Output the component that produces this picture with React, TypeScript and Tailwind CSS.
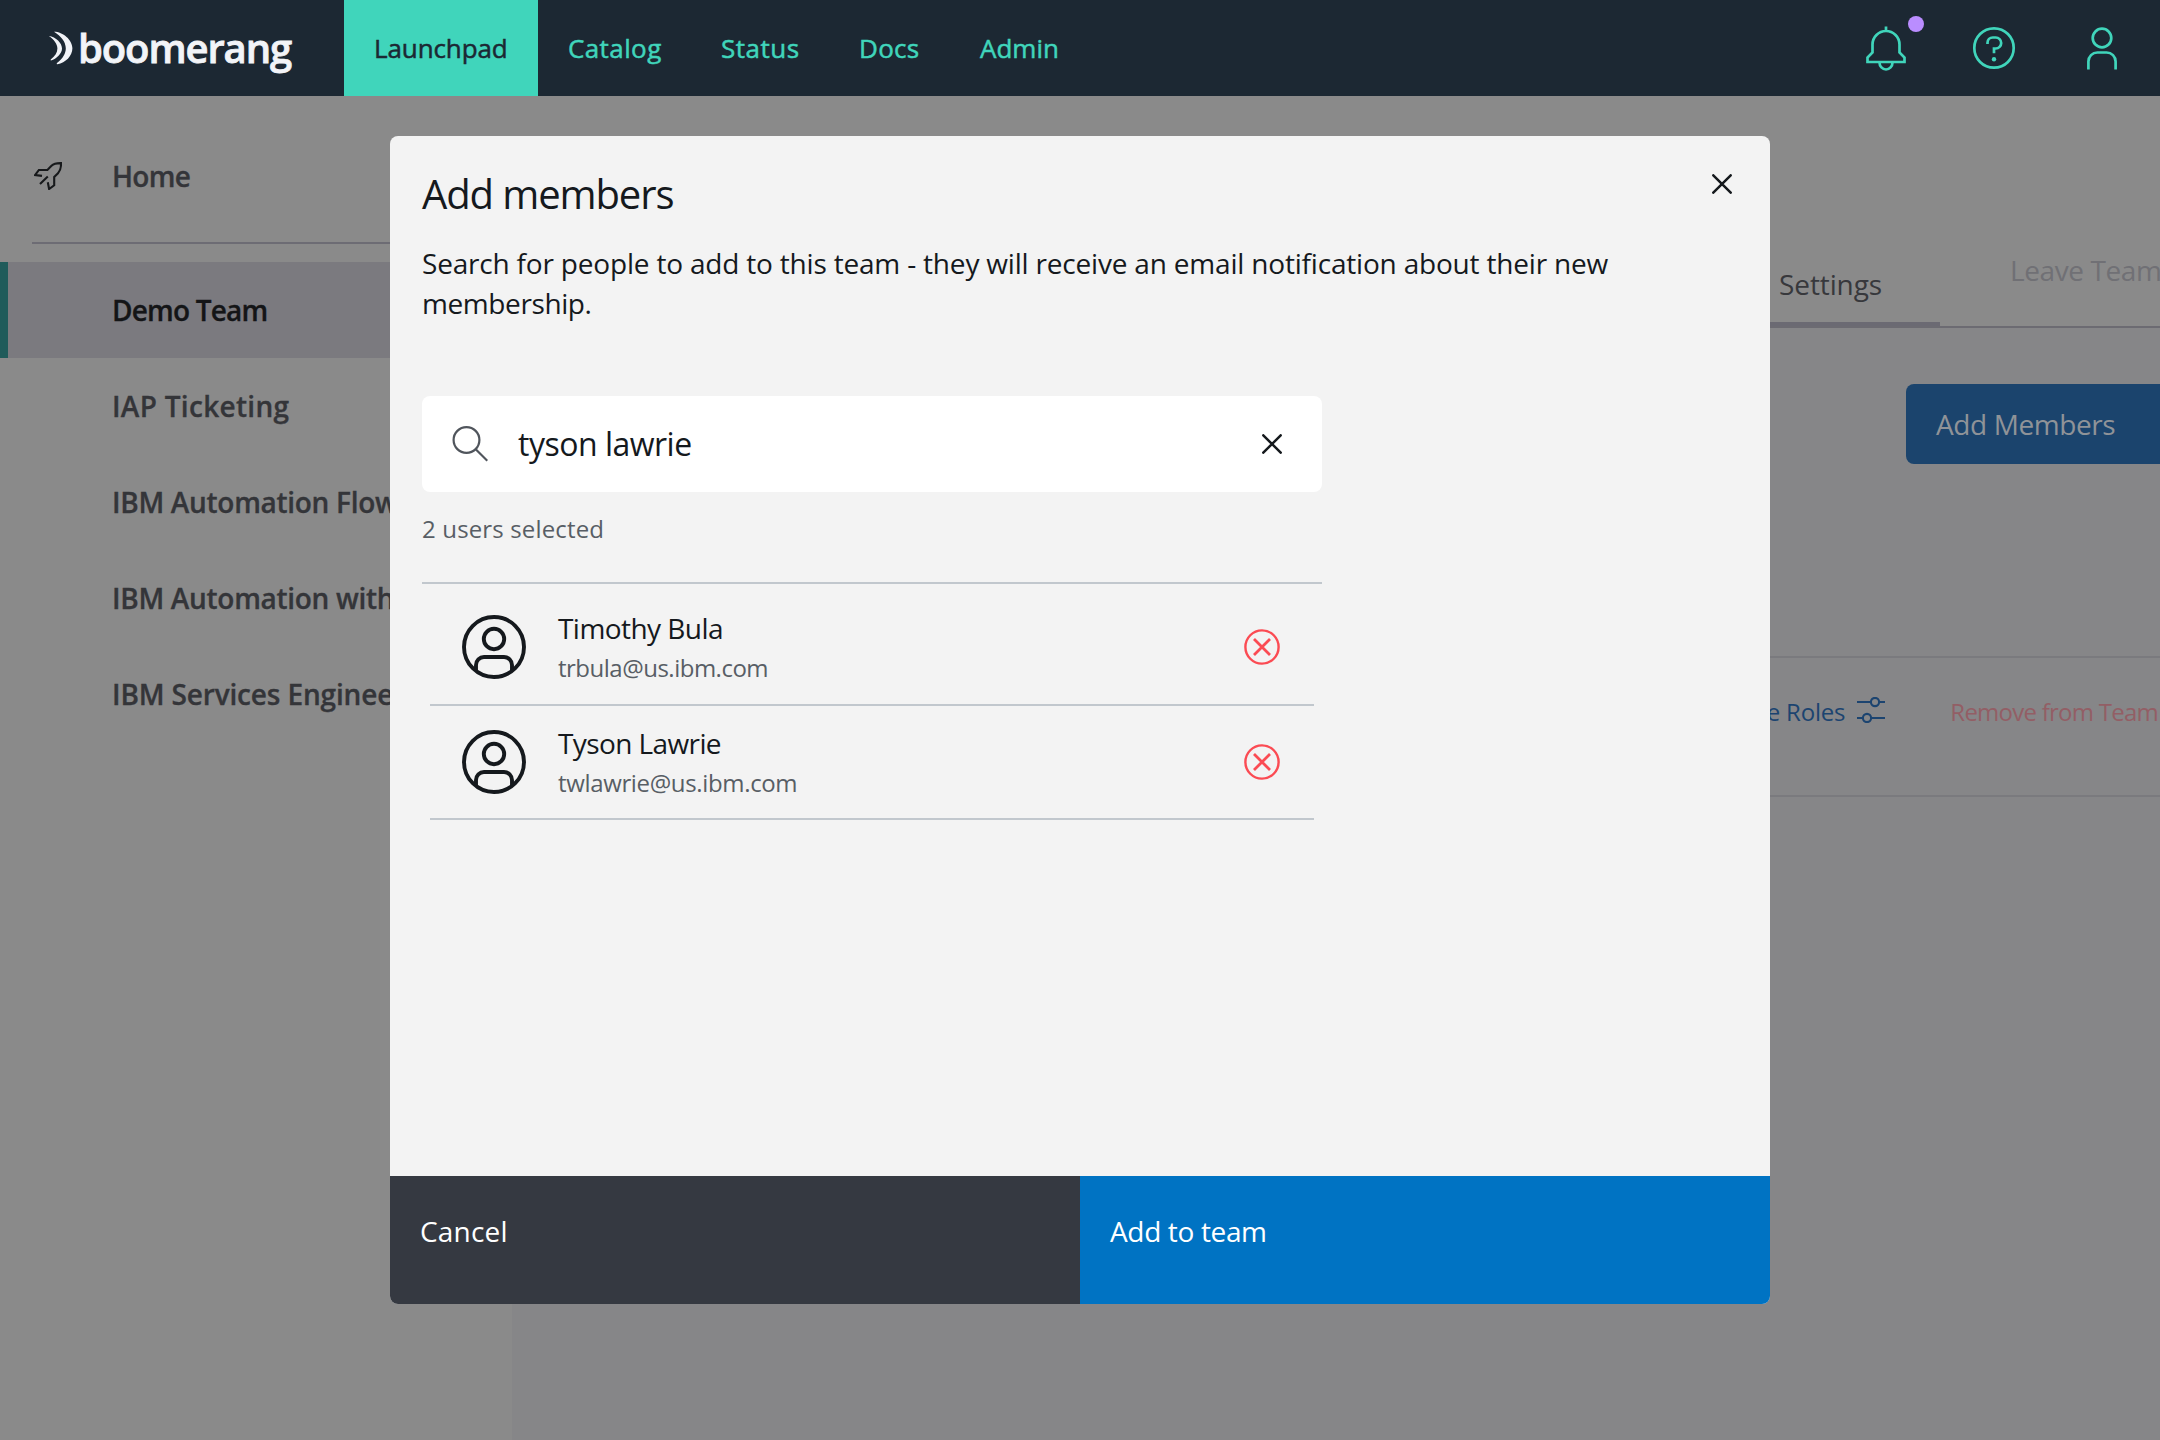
import type { ReactNode } from "react";

function Cross({ className }: { className: string }) {
  return (
    <svg className={className} viewBox="0 0 20 20" fill="none" stroke="#15191d" strokeWidth="2.5" strokeLinecap="round">
      <path d="M1.3 1.3L18.7 18.7M18.7 1.3L1.3 18.7" />
    </svg>
  );
}

function LogoMark() {
  return (
    <svg className="h-[34px] w-[26px]" viewBox="0 0 26 34" fill="#f2f4f8">
      <path d="M6 0.8C15 .8 24.4 9 24.4 17.3C24.4 25 17.5 32 9.5 33.2Q8 33.2 9 32C15 27.5 17.8 22.5 17.8 17.3C17.8 11 13 5 6 .8Z" />
      <path d="M.8 5C8 6 14 12 14 17.5C14 22.5 8.5 28 3 29.4Q2 29.3 3 28.3C7 25 9.4 21.5 9.4 17.5C9.4 13 6 8.5 .8 5Z" />
    </svg>
  );
}

function Bell() {
  return (
    <svg className="h-[46px] w-[42px]" viewBox="0 0 42 46" fill="none" stroke="#40d5bb" strokeWidth="2.7">
      <path d="M21 1.5V6M7.5 27.5V19.5a13.5 13.5 0 0 1 27 0V27.5L39.5 32.5V37H2.5V32.5Z" />
      <path d="M14.5 37.5a6.5 7 0 0 0 13 0" />
    </svg>
  );
}

function Help() {
  return (
    <svg className="h-[44px] w-[44px]" viewBox="0 0 44 44" fill="none" stroke="#40d5bb" strokeWidth="2.7">
      <circle cx="22" cy="22" r="19.7" />
      <path d="M15.5 18v-1.2a5.3 5.3 0 0 1 5.3-5.3h2.9a5.2 5.2 0 0 1 0 11H22V27.3" />
      <circle cx="22" cy="33.2" r="2.2" fill="#40d5bb" stroke="none" />
    </svg>
  );
}

function User() {
  return (
    <svg className="h-[44px] w-[32px]" viewBox="0 0 32 44" fill="none" stroke="#40d5bb" strokeWidth="2.7">
      <circle cx="16" cy="12" r="9.3" />
      <path d="M2.4 43.5V35.5a9 9 0 0 1 9-9h9.2a9 9 0 0 1 9 9V43.5" />
    </svg>
  );
}

function Rocket() {
  return (
    <svg className="h-[28px] w-[28px]" viewBox="0 0 28 28" fill="none" stroke="#17191b" strokeWidth="2.1">
      <path d="M8 13.9L1.2 13L4.9 8H13.4L17.5 3.8C19.8 1.5 22.5 1 27 1.1C27.2 6.5 26.3 8.8 24 11.2L20.2 15V23.3L15.1 27L13.8 20.3M13.8 14.6L6 22" />
    </svg>
  );
}

function Sliders() {
  return (
    <svg className="h-[26px] w-[28px]" viewBox="0 0 28 26" fill="none" stroke="#1c4470" strokeWidth="2.1">
      <path d="M0 5H13.5M22.5 5H28M0 21H5.5M14.5 21H28" />
      <circle cx="18" cy="5" r="4.1" />
      <circle cx="10" cy="21" r="4.1" />
    </svg>
  );
}

function Avatar() {
  return (
    <svg className="h-16 w-16" viewBox="0 0 64 64" fill="none" stroke="#15191d" strokeWidth="3.9">
      <circle cx="32" cy="32" r="30" />
      <circle cx="32" cy="24" r="10.2" />
      <path d="M14 55.5V50a8 8 0 0 1 8-8h20a8 8 0 0 1 8 8v5.5" />
    </svg>
  );
}

function Remove() {
  return (
    <svg className="h-9 w-9" viewBox="0 0 36 36" fill="none" stroke="#fb4b53" strokeWidth="2.4">
      <circle cx="18" cy="18" r="16.6" />
      <path d="M10 10L26 26M26 10L10 26" strokeWidth="2.8" />
    </svg>
  );
}

function NavItem({ className, children }: { className: string; children: ReactNode }) {
  return (
    <a className={"flex h-full items-center text-[26px] leading-none [-webkit-text-stroke:0.5px_currentColor] " + className}>
      {children}
    </a>
  );
}

function TeamRow({ className, children }: { className: string; children: ReactNode }) {
  return (
    <div className={"flex h-24 items-center pb-px text-[28px] leading-none font-semibold whitespace-nowrap [-webkit-text-stroke:0.3px_currentColor] " + className}>
      {children}
    </div>
  );
}

function Member({ name, email, className, nameClass, emailClass }: { name: string; email: string; className: string; nameClass: string; emailClass: string }) {
  return (
    <div className={"mx-2 flex items-center border-b-2 border-[#c1c7cd] pr-[34px] pl-8 " + className}>
      <Avatar />
      <div className="ml-8 flex-1 pt-[2px]">
        <div className={"text-[28px] leading-[40px] text-[#15191d] " + nameClass}>{name}</div>
        <div className={"text-[24px] leading-[40px] text-[#585e65] " + emailClass}>{email}</div>
      </div>
      <Remove />
    </div>
  );
}

export default function App() {
  return (
    <div className="relative flex h-[1440px] w-[2160px] flex-col overflow-hidden bg-[#8a8a8a] font-['Open_Sans',sans-serif]">
      <header className="flex h-24 shrink-0 items-center bg-[#1c2833] text-[#40d5bb]">
        <div className="flex w-[344px] items-center pl-12">
          <LogoMark />
          <span className="ml-1 text-[40px] leading-none font-semibold tracking-[-1.1px] text-[#f2f4f8] [-webkit-text-stroke:0.8px_currentColor]">boomerang</span>
        </div>
        <nav className="flex h-full flex-1">
          <NavItem className="w-[194px] bg-[#40d5bb] pl-[30px] tracking-[-0.1px] text-[#1c2833]">Launchpad</NavItem>
          <NavItem className="w-[152px] pl-[30px] tracking-[0.4px]">Catalog</NavItem>
          <NavItem className="w-[139px] pl-[31px] tracking-[0.5px]">Status</NavItem>
          <NavItem className="w-[121px] pl-[30px] tracking-[0.3px]">Docs</NavItem>
          <NavItem className="w-[137px] pl-[30px] tracking-[0px]">Admin</NavItem>
        </nav>
        <div className="flex items-center pr-[42px]">
          <div className="relative mr-[65px]">
            <Bell />
            <span className="absolute -top-[9px] left-[43px] h-4 w-4 rounded-full bg-[#ba8dff]" />
          </div>
          <div className="mr-[70px]"><Help /></div>
          <User />
        </div>
      </header>

      <div className="flex flex-1">
        <aside className="w-[512px] shrink-0 text-[#343539]">
          <div className="ml-8 flex h-[148px] items-center border-b-2 border-[#6d6c74]">
            <div className="mt-[14px] ml-[2px] w-[78px]"><Rocket /></div>
            <span className="mt-[13px] text-[28px] leading-none font-semibold tracking-[-0.7px] [-webkit-text-stroke:0.3px_currentColor]">Home</span>
          </div>
          <div className="mt-[18px]">
            <TeamRow className="border-l-8 border-[#1f5b5a] bg-[#7b7a7f] pl-[104px] tracking-[-0.8px] text-[#141517]">Demo Team</TeamRow>
            <TeamRow className="pl-[112px] tracking-[0.3px]">IAP Ticketing</TeamRow>
            <TeamRow className="pl-[112px] tracking-[-0.3px]">IBM Automation Flow</TeamRow>
            <TeamRow className="pl-[112px] tracking-[-0.3px]">IBM Automation with</TeamRow>
            <TeamRow className="pl-[112px] tracking-[-0.15px]">IBM Services Enginee</TeamRow>
          </div>
        </aside>

        <main className="flex flex-1 flex-col bg-[#868688]">
          <div className="flex h-[232px] items-end justify-end border-b-2 border-[#6c6b72] bg-[#8a8a8a]">
            <div className="flex h-[80px] w-[190px] border-b-4 border-[#6b6a73] pt-[18px] pl-[29px] text-[28px] leading-[40px] tracking-[-0.1px] text-[#37383c]">
              Settings
            </div>
            <div className="h-[80px] w-[220px] pt-1 pl-[70px] text-[28px] leading-[40px] tracking-[-0.4px] whitespace-nowrap text-[#707075]">
              Leave Team
            </div>
          </div>
          <div className="mt-[56px] ml-auto flex h-20 w-[254px] items-center rounded-l-lg bg-[#1b446d] pb-px pl-[30px] text-[28px] leading-none tracking-[-0.4px] text-[#8f9398]">
            Add Members
          </div>
          <div className="mt-[192px] flex h-[141px] items-start justify-end border-y-2 border-[#7a7a7e] text-[24px] leading-[40px] whitespace-nowrap">
            <span className="mt-[34px] tracking-[-0.2px] text-[#1c4470]">e Roles</span>
            <div className="mt-[39px] ml-[12px]"><Sliders /></div>
            <span className="mt-[34px] mr-[2px] ml-[65px] tracking-[-0.75px] text-[#935e65]">Remove from Team</span>
          </div>
        </main>
      </div>

      <section className="absolute top-[136px] left-[390px] flex h-[1168px] w-[1380px] flex-col overflow-hidden rounded-lg bg-[#f3f3f3] text-[#15191d]">
        <div className="flex h-[254px] pl-8">
          <div className="w-[1290px] pt-[34px]">
            <h1 className="text-[40px] leading-[48px] tracking-[-1.1px]">Add members</h1>
            <p className="mt-[25px] text-[28px] leading-[40px] tracking-[-0.19px]">
              Search for people to add to this team - they will receive an email notification about their new
              <br />
              <span className="tracking-[-0.4px]">membership.</span>
            </p>
          </div>
          <Cross className="mt-[38px] h-5 w-5" />
        </div>

        <div className="mt-[6px] ml-8 w-[900px]">
          <div className="flex h-24 items-center rounded-lg bg-white pr-10 pl-[30px]">
            <svg className="h-[36px] w-[36px]" viewBox="0 0 36 36" fill="none" stroke="#50555c" strokeWidth="2.2">
              <circle cx="14.5" cy="14" r="12.9" />
              <path d="M23.7 23.2L35.3 34.8" />
            </svg>
            <span className="ml-[30px] flex-1 text-[32px] leading-none tracking-[-0.5px]">tyson lawrie</span>
            <Cross className="h-5 w-5" />
          </div>
          <div className="flex h-[92px] border-b-2 border-[#c1c7cd] pt-[17px] text-[24px] leading-[40px] tracking-[0.15px] text-[#585e65]">2 users selected</div>
          <Member className="h-[122px] pt-[6px]" name="Timothy Bula" email="trbula@us.ibm.com" nameClass="tracking-[-0.55px]" emailClass="tracking-[-0.5px]" />
          <Member className="h-[114px]" name="Tyson Lawrie" email="twlawrie@us.ibm.com" nameClass="tracking-[-0.6px]" emailClass="tracking-[-0.35px]" />
        </div>

        <footer className="mt-auto flex h-32 text-[28px] leading-[40px] text-white">
          <div className="w-[690px] bg-[#353941] pt-[35px] pl-[30px] tracking-[0.2px]">Cancel</div>
          <div className="w-[690px] bg-[#0073c3] pt-[35px] pl-[30px] tracking-[-0.35px]">Add to team</div>
        </footer>
      </section>
    </div>
  );
}
